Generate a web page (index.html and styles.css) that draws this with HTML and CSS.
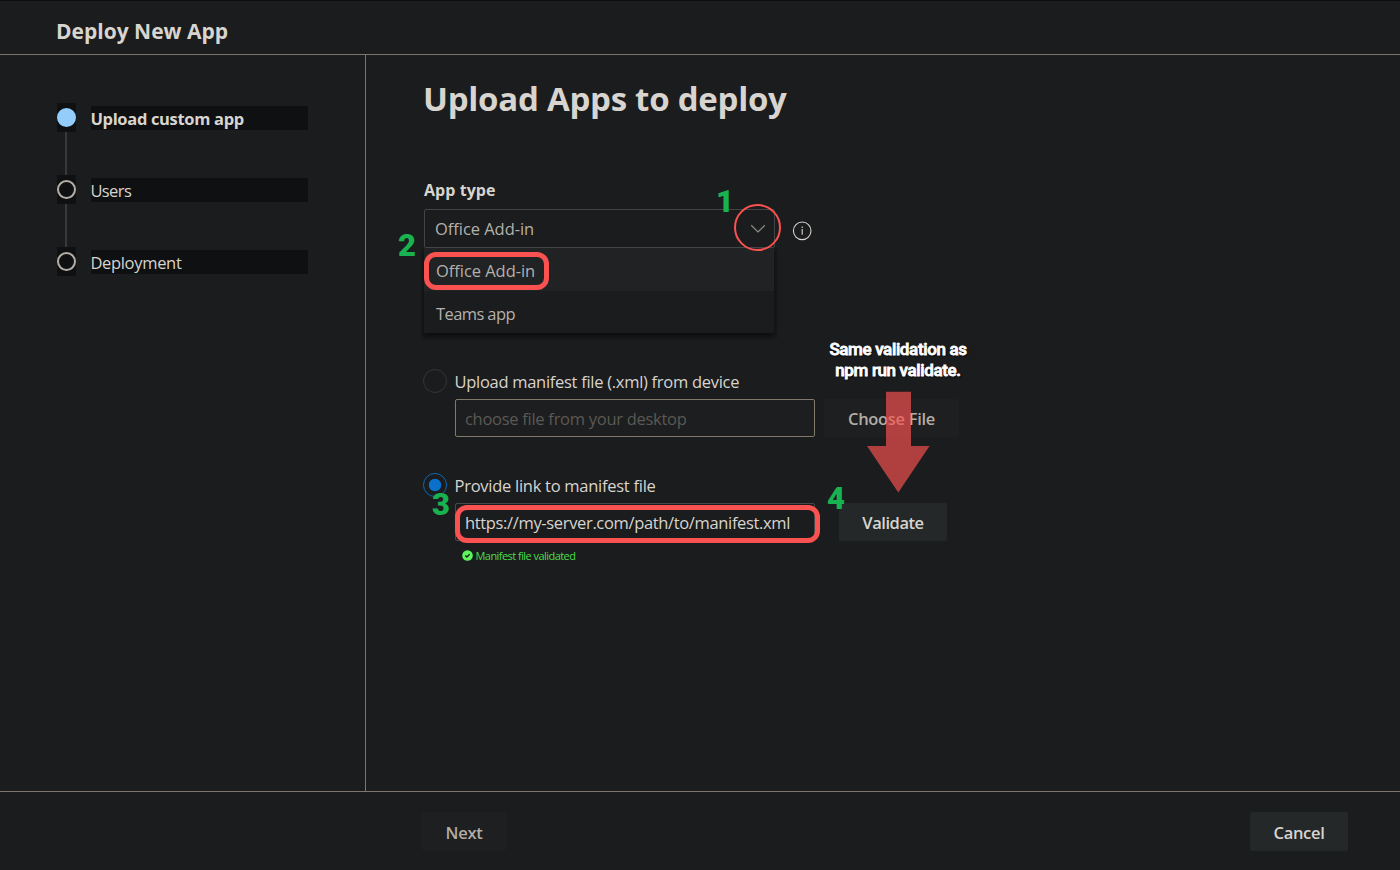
FILE: index.html
```html
<!DOCTYPE html>
<html lang="en">
<head>
<meta charset="utf-8">
<title>Deploy New App</title>
<link rel="stylesheet" href="styles.css">
</head>
<body>
<div class="app">
  <header class="header"><span class="t header-title">Deploy New App</span></header>
  <div class="body">
    <nav class="steps">
      <div class="step"><span class="marker"><i class="dot dot-active"></i></span><span class="step-label"><b class="t step-current">Upload custom app</b></span></div>
      <div class="connector"></div>
      <div class="step"><span class="marker"><i class="dot"></i></span><span class="step-label"><span class="t users">Users</span></span></div>
      <div class="connector"></div>
      <div class="step"><span class="marker"><i class="dot"></i></span><span class="step-label"><span class="t deployment">Deployment</span></span></div>
    </nav>
    <main class="content">
      <h1 class="title"><span class="t title-text">Upload Apps to deploy</span></h1>
      <div class="field-label"><span class="t app-type">App type</span></div>
      <div class="select-row">
        <div class="select"><span class="t option-text">Office Add-in</span>
          <svg class="chevron" width="16" height="10" viewBox="0 0 16 10"><path d="M1.2 1.3 8 8l6.8-6.7" fill="none" stroke="#8f8c88" stroke-width="1.2"/></svg>
        </div>
        <svg class="info" width="20" height="20" viewBox="0 0 20 20"><circle cx="10.2" cy="9.800" r="8.8" fill="none" stroke="#d8d4cf" stroke-width="1.1"/><path d="M10.200 8v5.8M10.200 5.500v1.4" stroke="#d8d4cf" stroke-width="1.1"/></svg>
      </div>
      <div class="menu">
        <div class="menu-item menu-item-selected"><span class="t option-text">Office Add-in</span></div>
        <div class="menu-item"><span class="t teams">Teams app</span></div>
      </div>
      <div class="radio-row"><i class="radio"></i><span class="t upload-label">Upload manifest file (.xml) from device</span></div>
      <div class="input-row">
        <div class="input"><span class="t placeholder">choose file from your desktop</span></div>
        <div class="button button-disabled choose"><span class="t choose-text">Choose File</span></div>
      </div>
      <div class="radio-row"><i class="radio radio-on"></i><span class="t link-label">Provide link to manifest file</span></div>
      <div class="input-row">
        <div class="input input-url"><span class="t url">https://my-server.com/path/to/manifest.xml</span></div>
        <div class="button validate"><span class="t validate-text">Validate</span></div>
      </div>
      <div class="status">
        <svg class="check" width="11" height="11" viewBox="0 0 11 11"><circle cx="5.5" cy="5.5" r="5.3" fill="#5cf55c"/><path d="M3.3 5.5 4.900 7 7.700 4.300" fill="none" stroke="#1b1c1d" stroke-width="1.3"/></svg>
        <span class="t status-text">Manifest file validated</span>
      </div>
    </main>
  </div>
  <footer class="footer">
    <div class="button button-disabled next"><span class="t next-text">Next</span></div>
    <div class="button cancel"><span class="t cancel-text">Cancel</span></div>
  </footer>

  <svg class="arrow" width="64" height="102" viewBox="0 0 64 102"><path d="M20 .8h25V55h18.500L32.300 101.500 1 55h19z" fill="#fa5251" fill-opacity=".67"/></svg>
  <div class="ring ring-chevron"></div>
  <div class="ring ring-option"></div>
  <div class="ring ring-url"></div>
  <span class="number n1">1</span>
  <span class="number n2">2</span>
  <span class="number n3">3</span>
  <span class="number n4">4</span>
  <div class="note"><span class="t note-a">Same validation as</span><br><span class="t note-b">npm run validate.</span></div>
</div>
</body>
</html>
```
FILE: styles.css
```css
* { box-sizing: border-box; }
body { margin: 0; background: #1b1c1d; color: #d8d4cf; font: 16.5px/22px "Open Sans", "Noto Sans", sans-serif; }
.t { white-space: nowrap; }
.app { position: relative; width: 1400px; height: 870px; overflow: hidden; display: flex; flex-direction: column; border-top: 1px solid #0c0d0e; }
.header { height: 54px; padding: 16px 0 0 56px; border-bottom: 1px solid #7e766b; font-size: 21px; line-height: 28px; font-weight: 700; }
.body { flex: 1; display: flex; min-height: 0; }
.steps { width: 366px; border-right: 1px solid #7e766b; padding: 48px 0 0 57px; }
.step { display: flex; align-items: center; gap: 15px; height: 29px; }
.marker { width: 19px; height: 29px; background: #0e1011; display: flex; align-items: center; justify-content: center; }
.dot { flex: none; width: 19px; height: 19px; border: 2.5px solid #b5aea5; border-radius: 50%; }
.dot-active { background: #92cdfc; border-color: #92cdfc; }
.step-label { width: 217px; height: 24px; margin-top: 1px; background: #0e1011; line-height: 25px; font-size: 16.5px; }
.step-label .t { margin-left: -0.6px; }
.step-current { letter-spacing: -0.33px; }
.users { letter-spacing: -0.6px; }
.deployment { letter-spacing: -0.32px; }
.connector { width: 2px; height: 43px; margin-left: 8px; background: #343a3b; }
.content { flex: 1; padding: 22px 0 0 58px; }
.title { margin: 0 0 0 -1px; height: 103px; font-size: 33px; line-height: 44px; letter-spacing: -0.26px; }
.field-label { height: 29px; font-weight: 700; font-size: 16px; line-height: 20px; }
.app-type { letter-spacing: 0.05px; }
.select-row { display: flex; align-items: center; gap: 17px; }
.select { width: 351px; height: 39px; border: 1px solid #424446; border-radius: 2px; padding: 0 8px 0 10px; display: flex; align-items: center; justify-content: space-between; color: #b4b1ad; }
.option-text { letter-spacing: -0.05px; }
.teams { letter-spacing: -0.6px; }
.info { margin-top: 5px; }
.menu { width: 350px; height: 85px; background: #1b1c1d; box-shadow: 0 3px 6px 1px rgba(0,0,0,.55); clip-path: inset(0 -4px -7px -3px); color: #b4b1ad; }
.menu-item { height: 42px; padding: 0 12px; line-height: 45px; }
.menu-item-selected { height: 43px; background: #212224; }
.radio-row { margin: 36px 0 0 -1px; height: 24px; display: flex; align-items: center; gap: 7.5px; line-height: 22px; }
.radio-row .t { padding-top: 2px; }
.upload-label { letter-spacing: -0.29px; }
.link-label { letter-spacing: -0.27px; }
.radio { width: 24px; height: 24px; border: 1px solid #343638; border-radius: 50%; }
.radio-on { border-color: #0b68b8; background: radial-gradient(circle, #0b70c9 5.8px, transparent 6.6px); }
.input-row { display: flex; margin: 6px 0 0 31px; height: 38px; }
.input { width: 360px; border: 1px solid #82796d; border-radius: 2px; padding-left: 9px; line-height: 37px; background: #1d1e1f; }
.input-url { border-color: #46494b; background: none; }
.placeholder { color: #5b5955; letter-spacing: -0.28px; }
.url { letter-spacing: -0.345px; }
.button { display: flex; align-items: center; justify-content: center; padding-top: 2px; border-radius: 2px; background: #242829; font-weight: 600; letter-spacing: -0.32px; }
.button-disabled { background: #1e1f20; color: #b3ada4; }
.choose { width: 135px; margin-left: 9px; }
.validate { width: 108px; margin-left: 24px; letter-spacing: -0.45px; }
.status { display: flex; align-items: center; gap: 3px; margin: 6px 0 0 37.5px; height: 18px; color: #4ade4a; font-size: 11px; line-height: 18px; letter-spacing: -0.55px; }
.check { margin-top: -1px; }
.footer { height: 79px; border-top: 1px solid #7e766b; padding: 20px 52px 0 422px; display: flex; justify-content: space-between; }
.footer .button { height: 39px; }
.next { width: 84px; }
.cancel { width: 98px; }
.arrow { position: absolute; left: 866px; top: 390px; }
.ring { position: absolute; border: 5px solid #fa5251; border-radius: 12px; }
.ring-chevron { left: 734px; top: 203px; width: 47px; height: 47px; border-width: 2px; border-radius: 50%; }
.ring-option { left: 424px; top: 251px; width: 125px; height: 38px; }
.ring-url { left: 455px; top: 504px; width: 364.500px; height: 38px; }
.number { position: absolute; color: #18b350; font: 900 31px/36px Roboto, sans-serif; }
.n1 { left: 716px; top: 183px; }
.n2 { left: 398px; top: 227px; }
.n3 { left: 432px; top: 486px; }
.n4 { left: 827px; top: 480px; }
.note { position: absolute; left: 798px; width: 200px; top: 338px; text-align: center; color: #fff; font: 500 17px/21px Roboto, sans-serif; letter-spacing: -0.36px; -webkit-text-stroke: 0.8px #fff; text-shadow: 1px 1px 2px #000; }
```
